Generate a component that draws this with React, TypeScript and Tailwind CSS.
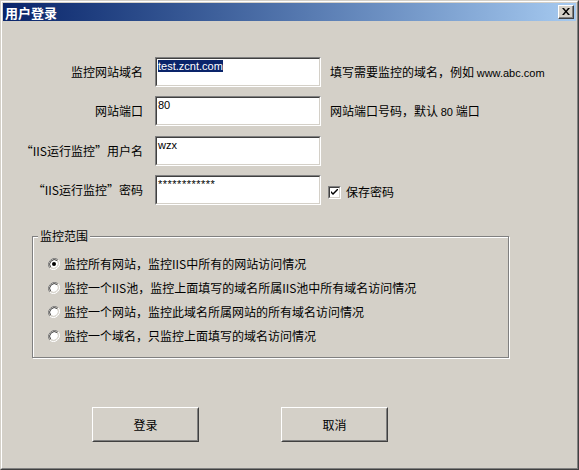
import type React from "react";

const cjk = { fontFamily: '"Noto Sans CJK SC", "Liberation Sans", sans-serif' };
const latin = { fontFamily: '"Liberation Sans", "Noto Sans CJK SC", sans-serif' };

const Sunken: React.FC<{ children?: React.ReactNode }> = ({ children }) => (
	<div className="w-[166px] h-[30px] border border-t-[#808080] border-l-[#808080] border-b-white border-r-white">
		<div className="w-full h-full border border-t-[#404040] border-l-[#404040] border-b-[#d4d0c8] border-r-[#d4d0c8] bg-white px-[1px] pt-[1px] text-[11px] leading-[13px] text-black" style={latin}>
			{children}
		</div>
	</div>
);

const Radio: React.FC<{ checked?: boolean }> = ({ checked }) => (
	<svg width="12" height="12" viewBox="0 0 12 12" className="shrink-0">
		<path d="M10.2 1.8A6 6 0 0 0 1.8 10.2" fill="none" stroke="#808080" strokeWidth="1" />
		<path d="M1.8 10.2A6 6 0 0 0 10.2 1.8" fill="none" stroke="#ffffff" strokeWidth="1" />
		<circle cx="6" cy="6" r="4.6" fill="#fff" />
		<path d="M9.3 2.7A4.7 4.7 0 0 0 2.7 9.3" fill="none" stroke="#404040" strokeWidth="1" />
		<path d="M2.7 9.3A4.7 4.7 0 0 0 9.3 2.7" fill="none" stroke="#d4d0c8" strokeWidth="1" />
		{checked && <circle cx="6" cy="6" r="2" fill="#000" />}
	</svg>
);

const Button: React.FC<{ label: string }> = ({ label }) => (
	<div className="w-[107px] h-[35px] border border-t-white border-l-white border-b-[#404040] border-r-[#404040]">
		<div className="w-full h-full border border-t-[#d4d0c8] border-l-[#d4d0c8] border-b-[#808080] border-r-[#808080] flex items-center justify-center text-[12px] text-black" style={cjk}>
			{label}
		</div>
	</div>
);

const options = [
	"监控所有网站，监控IIS中所有的网站访问情况",
	"监控一个IIS池，监控上面填写的域名所属IIS池中所有域名访问情况",
	"监控一个网站，监控此域名所属网站的所有域名访问情况",
	"监控一个域名，只监控上面填写的域名访问情况",
];

const App: React.FC = () => {
	return (
		<div className="w-[579px] h-[470px] border border-t-[#d4d0c8] border-l-[#d4d0c8] border-b-[#404040] border-r-[#404040] bg-[#d4d0c8]">
			<div className="w-full h-full border border-t-white border-l-white border-b-[#808080] border-r-[#808080] p-[1px] flex flex-col">
				{/* title bar */}
				<div className="h-[18px] flex items-center justify-between bg-gradient-to-r from-[#0a246a] to-[#a6caf0] pl-[2px] pr-[2px]">
					<span className="text-white font-bold text-[13px] leading-none" style={cjk}>用户登录</span>
					<div className="w-[16px] h-[14px] border border-t-white border-l-white border-b-[#404040] border-r-[#404040] bg-[#d4d0c8]">
						<div className="w-full h-full border-b border-r border-b-[#808080] border-r-[#808080] flex items-center justify-center">
							<svg width="8" height="7" viewBox="0 0 8 7">
								<path d="M0 0L2 0L4 2.5L6 0L8 0L5 3.5L8 7L6 7L4 4.5L2 7L0 7L3 3.5Z" fill="#000" />
							</svg>
						</div>
					</div>
				</div>

				{/* form rows */}
				<div className="mt-[36px] flex flex-col text-[12px] text-black" style={cjk}>
					<div className="flex items-center h-[30px]">
						<div className="w-[140px] text-right">监控网站域名</div>
						<div className="ml-[12px]">
							<Sunken>
								<span className="bg-[#0a246a] text-white">test.zcnt.com</span>
							</Sunken>
						</div>
						<div className="ml-[9px]">
							填写需要监控的域名，例如 <span className="text-[11px]" style={latin}>www.abc.com</span>
						</div>
					</div>
					<div className="flex items-center h-[30px] mt-[9px]">
						<div className="w-[140px] text-right">网站端口</div>
						<div className="ml-[12px]">
							<Sunken>80</Sunken>
						</div>
						<div className="ml-[9px]">
							网站端口号码，默认 <span className="text-[11px]" style={latin}>80</span> 端口
						</div>
					</div>
					<div className="flex items-center h-[30px] mt-[10px]">
						<div className="w-[140px] text-right">“IIS运行监控”用户名</div>
						<div className="ml-[12px]">
							<Sunken>wzx</Sunken>
						</div>
					</div>
					<div className="flex items-center h-[30px] mt-[9px]">
						<div className="w-[140px] text-right">“IIS运行监控”密码</div>
						<div className="ml-[12px]">
							<Sunken>
								<span className="tracking-[0.5px]">************</span>
							</Sunken>
						</div>
						<div className="ml-[7px] flex items-center gap-[5px] mt-[4px]">
							<div className="w-[13px] h-[13px] border border-t-[#808080] border-l-[#808080] border-b-white border-r-white">
								<div className="w-full h-full border border-t-[#404040] border-l-[#404040] border-b-[#d4d0c8] border-r-[#d4d0c8] bg-white flex items-center justify-center">
									<svg width="7" height="7" viewBox="0 0 7 7">
										<path d="M0 2L0 4L2 6L7 1L7 -1L2 4Z" fill="#000" />
									</svg>
								</div>
							</div>
							<span>保存密码</span>
						</div>
					</div>
				</div>

				{/* group box */}
				<div className="relative ml-[29px] mt-[31px] w-[477px] h-[122px] border border-[#808080] shadow-[inset_1px_1px_0_#fff,1px_1px_0_#fff] text-[12px] text-black" style={cjk}>
					<span className="absolute left-[5px] top-[-9px] leading-[16px] px-[2px] bg-[#d4d0c8]">监控范围</span>
					<div className="flex flex-col gap-[12px] pt-[21px] pl-[15px]">
						{options.map((opt, i) => (
							<div key={opt} className="flex items-center gap-[4px] h-[12px]">
								<Radio checked={i === 0} />
								<span className="leading-none">{opt}</span>
							</div>
						))}
					</div>
				</div>

				{/* buttons */}
				<div className="flex ml-[89px] mt-[49px] gap-[82px]">
					<Button label="登录" />
					<Button label="取消" />
				</div>
			</div>
		</div>
	);
};

export default App;
